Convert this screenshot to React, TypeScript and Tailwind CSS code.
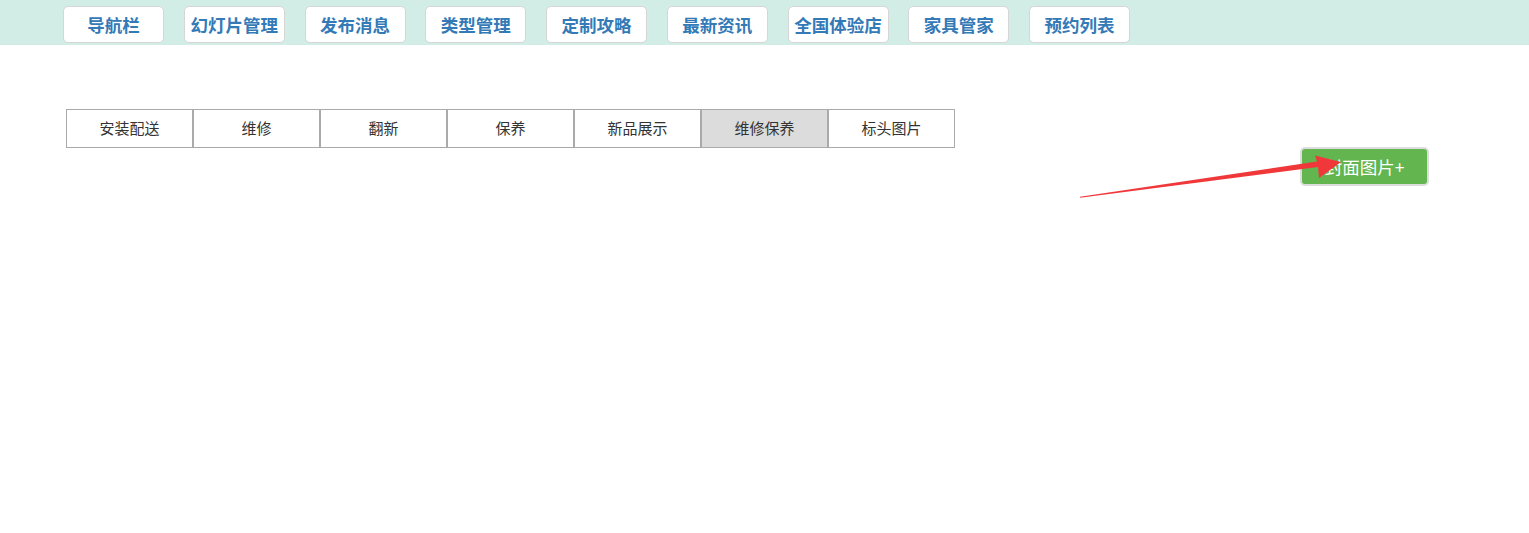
const navItems = ['导航栏', '幻灯片管理', '发布消息', '类型管理', '定制攻略', '最新资讯', '全国体验店', '家具管家', '预约列表'];
const tabs = ['安装配送', '维修', '翻新', '保养', '新品展示', '维修保养', '标头图片'];

export default function App() {
    const active = '维修保养';

    return (
        <div className="relative min-h-[533px] bg-white font-['Noto_Sans_CJK_SC','Noto_Sans',sans-serif]">
            {/* Top navigation */}
            <div className="h-[45px] bg-[#d2ede5] flex items-start pt-[6px] pl-[63px] gap-[19.75px]">
                {navItems.map((item) => (
                    <button
                        key={item}
                        className="w-[101px] h-[37px] bg-white border border-[#d6d6d6] rounded-[5px] flex items-center justify-center text-[17.5px] font-bold text-[#337ab7] leading-none"
                    >
                        {item}
                    </button>
                ))}
            </div>

            {/* Tabs */}
            <div className="mt-[64px] ml-[66px] flex">
                {tabs.map((tab) => (
                    <div
                        key={tab}
                        className={`w-[127px] h-[39px] border border-[#aaa] flex items-center justify-center text-[15px] text-[#333] ${
                            tab === active ? 'bg-[#dcdcdc]' : 'bg-white'
                        }`}
                    >
                        {tab}
                    </div>
                ))}
            </div>

            {/* Cover image button */}
            <div className="flex justify-end pr-[100px] -mt-[1px]">
                <button className="w-[129px] h-[39px] border-2 border-[#ddd] rounded-[5px] bg-[#62b54f] text-white text-[17.5px] flex items-center justify-center leading-none">
                    封面图片+
                </button>
            </div>

            {/* Annotation arrow */}
            <svg className="absolute left-0 top-0 pointer-events-none" width="1529" height="533">
                <polygon points="1080,197.8 1080,196.8 1317,161.5 1315,155.5 1341,162 1319,178 1318,167" fill="#f0383a" />
            </svg>
        </div>
    );
}
